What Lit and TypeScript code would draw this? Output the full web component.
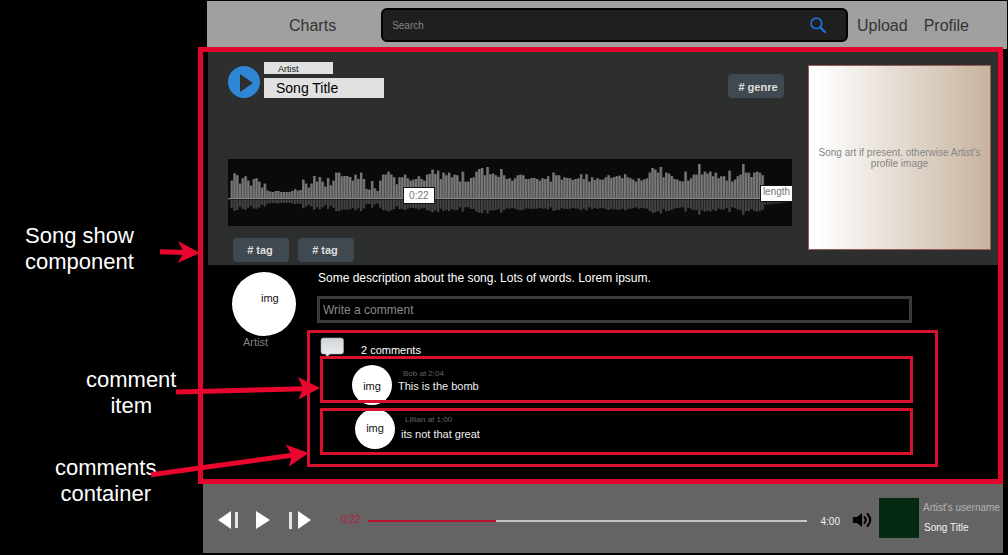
import { LitElement, html, css, svg } from "lit";
import { customElement, property, state } from "lit/decorators.js";

// Bar heights of the loudness curve, in thirds of a pixel.
const PEAKS = [
  55, 77, 71, 46, 62, 68, 55, 40, 60, 62, 52, 34, 46, 25, 22, 21, 24, 24, 21, 21,
  21, 21, 24, 29, 25, 27, 58, 46, 34, 46, 69, 52, 66, 52, 37, 63, 41, 55, 79, 79,
  68, 69, 69, 66, 55, 73, 60, 79, 60, 30, 28, 54, 32, 24, 55, 73, 73, 82, 73, 65,
  44, 65, 65, 73, 62, 55, 58, 60, 68, 60, 55, 73, 75, 88, 75, 85, 60, 79, 71, 79,
  65, 73, 71, 52, 82, 52, 52, 63, 65, 82, 90, 93, 71, 96, 74, 76, 71, 66, 90, 71,
  60, 62, 55, 62, 71, 73, 71, 60, 60, 63, 63, 60, 55, 62, 60, 68, 52, 79, 71, 71,
  58, 65, 63, 62, 57, 60, 62, 74, 60, 74, 52, 65, 57, 62, 58, 58, 65, 71, 63, 66,
  68, 70, 62, 74, 65, 62, 58, 52, 62, 55, 59, 62, 79, 93, 88, 79, 96, 65, 79, 76,
  69, 60, 58, 54, 52, 82, 55, 62, 73, 73, 105, 73, 82, 76, 82, 68, 79, 62, 68, 68,
  55, 85, 52, 58, 68, 73, 105, 79, 79, 66, 79, 82, 79, 71,
];

const TAIL = [12, 12, 10, 10, 8, 8, 6, 5, 4, 3];

@customElement("wave-form")
export class WaveForm extends LitElement {
  static styles = css`
    :host {
      display: block;
      position: relative;
      height: 67px;
      background: #0a0a0a;
      font-size: 10px;
      color: #777;
    }
    .curve {
      display: block;
      width: 100%;
      height: 100%;
    }
    .mark {
      position: absolute;
      box-sizing: border-box;
      height: 17px;
      line-height: 15px;
      background: #fff;
      border: 1px solid #111;
      text-align: center;
    }
    .position {
      left: 31%;
      top: 28px;
      width: 32px;
    }
    .length {
      right: 0;
      top: 26px;
      width: 32px;
      line-height: 12px;
      border-right: 0;
    }
  `;

  render() {
    const step = 2.75;
    return html`
      <svg class="curve" viewBox="0 0 564 67" preserveAspectRatio="none" aria-hidden="true">
        ${PEAKS.map((p, i) => {
          const x = 2.7 + i * step;
          const h = p / 3;
          return svg`
            <rect x=${x} y=${40 - h} width="2.75" height=${h} fill="#4c4c4c" />
            <rect x=${x} y=${40 - h} width="1.9" height=${h} fill="#787878" />
            <rect x=${x} y="40" width="2.75" height=${h * 0.42 + 1} fill="#222" />
            <rect x=${x} y="40" width="1.9" height=${h * 0.42 + 1} fill="#434343" />`;
        })}
        ${TAIL.map(
          (p, i) => svg`<rect x=${536 + i * step} y="40" width="2.2" height=${p / 3 + 2} fill="#343434" />`
        )}
        <rect x="0" y="39" width="564" height="1" fill="#858585" />
        <rect x="0" y="40" width="564" height="1" fill="#222" />
      </svg>
      <span class="mark position">0:22</span>
      <span class="mark length">length</span>
    `;
  }
}

@customElement("comment-item")
export class CommentItem extends LitElement {
  @property() author = "";
  @property() time = "";
  @property() text = "";

  static styles = css`
    :host {
      display: flex;
      position: relative;
      box-sizing: border-box;
      height: 47px;
      padding: 9px 8px 0 32px;
      gap: 6px;
      font-size: 11px;
      line-height: 13px;
      color: #f0f0f0;
    }
    :host([raised]) {
      padding: 1px 8px 0 35px;
    }
    :host::after {
      content: "";
      position: absolute;
      inset: 0;
      border: 3px solid #d8112f;
      pointer-events: none;
    }
    .avatar {
      flex: none;
      width: 40px;
      height: 40px;
      border-radius: 50%;
      background: #fff;
      color: #111;
      text-align: center;
      line-height: 42px;
    }
    :host([raised]) .avatar {
      line-height: 38px;
    }
    .body {
      padding-top: 3px;
    }
    .meta {
      padding-left: 5px;
      font-size: 8px;
      line-height: 11px;
      color: #666;
    }
    .text {
      padding-top: 1px;
    }
    :host([raised]) .body {
      padding-top: 5px;
    }
    :host([raised]) .meta {
      padding-left: 4px;
    }
    :host([raised]) .text {
      padding-top: 3px;
    }
  `;

  render() {
    return html`
      <div class="avatar">img</div>
      <div class="body">
        <div class="meta">${this.author} at ${this.time}</div>
        <div class="text">${this.text}</div>
      </div>
    `;
  }
}

@customElement("app-root")
export class AppRoot extends LitElement {
  @state() private position = 70;

  static styles = css`
    :host {
      display: grid;
      grid-template-columns: 198px minmax(0, 1fr);
      position: relative;
      min-height: 100vh;
      background: #000;
      font-family: "Liberation Sans", Arial, sans-serif;
      color: #fff;
    }
    button,
    input {
      font-family: inherit;
      margin: 0;
      padding: 0;
      border: 0;
      background: none;
      color: inherit;
    }
    svg {
      display: block;
    }

    /* side notes */
    .notes {
      display: flex;
      flex-direction: column;
      align-items: flex-start;
      padding-top: 223px;
      font-size: 22px;
      line-height: 26px;
      text-align: center;
    }
    .note {
      margin: 0 0 0 25px;
    }
    .note-item {
      margin: 92px 0 0 86px;
    }
    .note-list {
      margin: 36px 0 0 55px;
    }
    .arrows {
      position: absolute;
      left: 0;
      top: 0;
      z-index: 3;
      pointer-events: none;
    }

    /* top bar */
    .top {
      display: flex;
      align-items: center;
      box-sizing: border-box;
      height: 48px;
      margin: 1px 1px 0 9px;
      padding: 0 38px 0 82px;
      background: #a0a0a0;
      font-size: 16px;
    }
    .link {
      color: #333;
      text-decoration: none;
      line-height: 18px;
      padding-top: 2px;
    }
    .search {
      flex: 1;
      display: flex;
      align-items: center;
      box-sizing: border-box;
      height: 34px;
      margin: 0 9px 0 45px;
      padding: 0 20px 0 9px;
      border: 2px solid #000;
      border-radius: 6px;
      background: #1f1f1f;
    }
    .search-field {
      flex: 1;
      min-width: 0;
      font-size: 10px;
      outline: none;
    }
    .search-field::placeholder {
      color: #848484;
      opacity: 1;
    }
    .profile {
      margin-left: 16px;
    }

    /* song panel */
    .song {
      position: relative;
      margin: -2px 5px 0 0;
      border: 5px solid #e2062c;
      padding-left: 5px;
    }
    .hero {
      display: grid;
      grid-template-columns: minmax(0, 1fr) 183px;
      gap: 16px;
      padding: 10px 7px 3px 20px;
      background: #2d2f2f;
    }
    .heading {
      display: flex;
      align-items: flex-end;
      margin-bottom: 61px;
    }
    .names {
      flex: 1;
      padding-left: 4px;
      color: #111;
    }
    .artist {
      box-sizing: border-box;
      width: 69px;
      height: 12px;
      margin-bottom: 4px;
      padding-left: 14px;
      background: #e1e1e1;
      font-size: 9px;
      line-height: 15px;
    }
    .title {
      box-sizing: border-box;
      width: 120px;
      height: 20px;
      margin: 0;
      padding-left: 12px;
      background: #e1e1e1;
      font-size: 14px;
      font-weight: normal;
      line-height: 21px;
      color: #000;
    }
    .tag {
      box-sizing: border-box;
      width: 56px;
      height: 24px;
      padding-right: 2px;
      border-radius: 4px;
      background: #414950;
      color: #dedede;
      font-size: 11px;
      font-weight: bold;
      text-align: center;
    }
    .genre {
      margin-right: 8px;
      padding: 2px 0 0 4px;
    }
    .tags {
      display: flex;
      gap: 9px;
      padding: 12px 0 0 5px;
    }
    .art {
      display: flex;
      align-items: center;
      justify-content: center;
      box-sizing: border-box;
      height: 185px;
      margin-top: 3px;
      border: 1px solid #9c5a55;
      background: linear-gradient(90deg, #fff 5%, #c7b39e);
      color: #858585;
      font-size: 10px;
      line-height: 11px;
      text-align: center;
    }

    /* description and comments */
    .details {
      display: grid;
      grid-template-columns: 64px minmax(0, 1fr);
      column-gap: 11px;
      padding: 7px 60px 12px 24px;
      font-size: 11px;
    }
    .portrait {
      box-sizing: border-box;
      width: 64px;
      height: 64px;
      padding: 20px 0 0 29px;
      border-radius: 50%;
      background: #fff;
      color: #111;
      line-height: 13px;
    }
    .portrait-name {
      padding-left: 11px;
      line-height: 13px;
      color: #808080;
    }
    .description {
      margin: 0 0 11px 11px;
      font-size: 12px;
      line-height: 13px;
    }
    .comment-field {
      display: block;
      box-sizing: border-box;
      width: calc(100% - 36px);
      height: 27px;
      margin-left: 10px;
      padding-left: 3px;
      border: 3px solid #3a3a3a;
      font-size: 12px;
      outline: none;
    }
    .comment-field::placeholder {
      color: #8a8a8a;
      opacity: 1;
    }
    .comments {
      margin-top: 7px;
      padding: 0 22px 9px 10px;
      border: 3px solid #d8112f;
    }
    .count {
      display: flex;
      gap: 17px;
      height: 23px;
    }
    .bubble {
      margin-top: 4px;
    }
    .count-text {
      padding-top: 11px;
      line-height: 13px;
    }
    .list {
      display: grid;
      gap: 5px;
    }

    /* player */
    .player {
      display: flex;
      align-items: center;
      box-sizing: border-box;
      height: 69px;
      margin: 0 5px;
      padding: 2px 0 0 15px;
      background: #646464;
      font-size: 10px;
      line-height: 12px;
    }
    .controls {
      display: flex;
      gap: 18px;
    }
    .elapsed {
      margin-left: 30px;
      color: #c0143a;
    }
    .seek {
      flex: 1;
      min-width: 0;
      height: 12px;
      margin: 3px 14px 0 8px;
      -webkit-appearance: none;
      appearance: none;
    }
    .seek::-webkit-slider-runnable-track {
      height: 2px;
      background: linear-gradient(90deg, #b8122f var(--played), #c4c4c4 var(--played));
    }
    .seek::-webkit-slider-thumb {
      -webkit-appearance: none;
      width: 1px;
      height: 2px;
    }
    .total {
      padding-top: 4px;
      color: #f0f0f0;
    }
    .volume {
      margin: 0 6px 0 13px;
    }
    .cover {
      width: 40px;
      height: 40px;
      margin-bottom: 4px;
      background: #052a14;
    }
    .now {
      display: grid;
      gap: 8px;
      box-sizing: border-box;
      width: 84px;
      margin-bottom: 4px;
      padding-left: 4px;
      white-space: nowrap;
    }
    .now-artist {
      color: #b4b4b4;
    }
    .now-title {
      padding-left: 1px;
      color: #f4f4f4;
    }
  `;

  private seek(e: Event) {
    this.position = Number((e.target as HTMLInputElement).value);
  }

  render() {
    const played = (this.position / 240) * 100;
    return html`
      <aside class="notes">
        <p class="note">Song show<br />component</p>
        <p class="note note-item">comment<br />item</p>
        <p class="note note-list">comments<br />container</p>
      </aside>

      <main>
        <nav class="top">
          <a class="link" href="#charts">Charts</a>
          <div class="search">
            <input class="search-field" type="text" aria-label="Search" placeholder="Search" />
            <button aria-label="Search">
              <svg width="16" height="16" viewBox="0 0 16 16" fill="none" stroke="#1c6fd6">
                <circle cx="6.4" cy="6.4" r="5.3" stroke-width="1.8" />
                <path d="M10.4 10.4L15 15" stroke-width="2.4" stroke-linecap="round" />
              </svg>
            </button>
          </div>
          <a class="link" href="#upload">Upload</a>
          <a class="link profile" href="#profile">Profile</a>
        </nav>

        <section class="song">
          <div class="hero">
            <div>
              <div class="heading">
                <button aria-label="Play song">
                  <svg width="32" height="32" viewBox="0 0 32 32">
                    <circle cx="16" cy="16" r="16" fill="#2e86d4" />
                    <path d="M12 8L25 17L12 26Z" fill="#2d2f2f" />
                  </svg>
                </button>
                <div class="names">
                  <div class="artist">Artist</div>
                  <h1 class="title">Song Title</h1>
                </div>
                <button class="tag genre"># genre</button>
              </div>
              <wave-form></wave-form>
              <div class="tags">
                <button class="tag"># tag</button>
                <button class="tag"># tag</button>
              </div>
            </div>
            <div class="art">Song art if present. otherwise Artist's<br />profile image</div>
          </div>

          <div class="details">
            <div>
              <div class="portrait">img</div>
              <div class="portrait-name">Artist</div>
            </div>
            <div>
              <p class="description">Some description about the song. Lots of words. Lorem ipsum.</p>
              <input class="comment-field" type="text" aria-label="Write a comment" placeholder="Write a comment" />
              <div class="comments">
                <div class="count">
                  <svg class="bubble" width="24" height="20" viewBox="0 0 24 20" aria-hidden="true">
                    <defs>
                      <linearGradient id="fade" x1="0" y1="0" x2="0" y2="1">
                        <stop offset="0" stop-color="#d2d6d9" />
                        <stop offset="1" stop-color="#eceeef" />
                      </linearGradient>
                    </defs>
                    <path
                      d="M3 1H21Q23.500 1 23.500 3.500V14.500Q23.500 17 21 17H10L7 19.500L5.500 17H3Q1 17 1 14.500V3.500Q1 1 3 1Z"
                      fill="url(#fade)"
                      stroke="#a6aaad"
                      stroke-width="0.6"
                    />
                  </svg>
                  <span class="count-text">2 comments</span>
                </div>
                <div class="list">
                  <comment-item author="Bob" time="2:04" text="This is the bomb"></comment-item>
                  <comment-item raised author="Lillian" time="1:00" text="its not that great"></comment-item>
                </div>
              </div>
            </div>
          </div>
        </section>

        <footer class="player">
          <div class="controls">
            <button aria-label="Previous">
              <svg width="20" height="18" viewBox="0 0 20 18">
                <path d="M0 9L13 0V18Z" fill="#fff" />
                <path d="M17 1H20V17H17Z" fill="#e4e4e4" />
              </svg>
            </button>
            <button aria-label="Play">
              <svg width="14" height="18" viewBox="0 0 14 18"><path d="M0 0L14 9L0 18Z" fill="#fff" /></svg>
            </button>
            <button aria-label="Next">
              <svg width="23" height="18" viewBox="0 0 23 18">
                <path d="M1 1H4V18H1Z" fill="#e4e4e4" />
                <path d="M10 0L23 9L10 18Z" fill="#fff" />
              </svg>
            </button>
          </div>
          <span class="elapsed">0:22</span>
          <input
            class="seek"
            type="range"
            aria-label="Seek"
            min="0"
            max="240"
            .value=${String(this.position)}
            style="--played: ${played}%"
            @input=${this.seek}
          />
          <span class="total">4:00</span>
          <button class="volume" aria-label="Volume">
            <svg width="20" height="16" viewBox="0 0 20 16">
              <path d="M0 5H4L9 1V15L4 11H0Z" fill="#000" />
              <path d="M11.500 5Q14 8 11.500 11M14.500 2Q20 8 14.500 14" fill="none" stroke="#000" stroke-width="2" stroke-linecap="round" />
            </svg>
          </button>
          <div class="cover"></div>
          <div class="now">
            <span class="now-artist">Artist's username</span>
            <span class="now-title">Song Title</span>
          </div>
        </footer>
      </main>

      <svg class="arrows" width="330" height="555" viewBox="0 0 330 555" aria-hidden="true">
        <g stroke="#e8062e" stroke-width="5">
          <path d="M160 251.700L186 252.400" />
          <path d="M176 392L304 388.800" />
          <path d="M151 474.800L294 455" />
        </g>
        <g fill="#e8062e">
          <path d="M178 241L200 253L177.500 263L184 252.500Z" />
          <path d="M298 377L320 388L298.500 399.500L303 388.500Z" />
          <path d="M285.500 444.500L308.500 453L289 466.500L292 455Z" />
        </g>
      </svg>
    `;
  }
}
